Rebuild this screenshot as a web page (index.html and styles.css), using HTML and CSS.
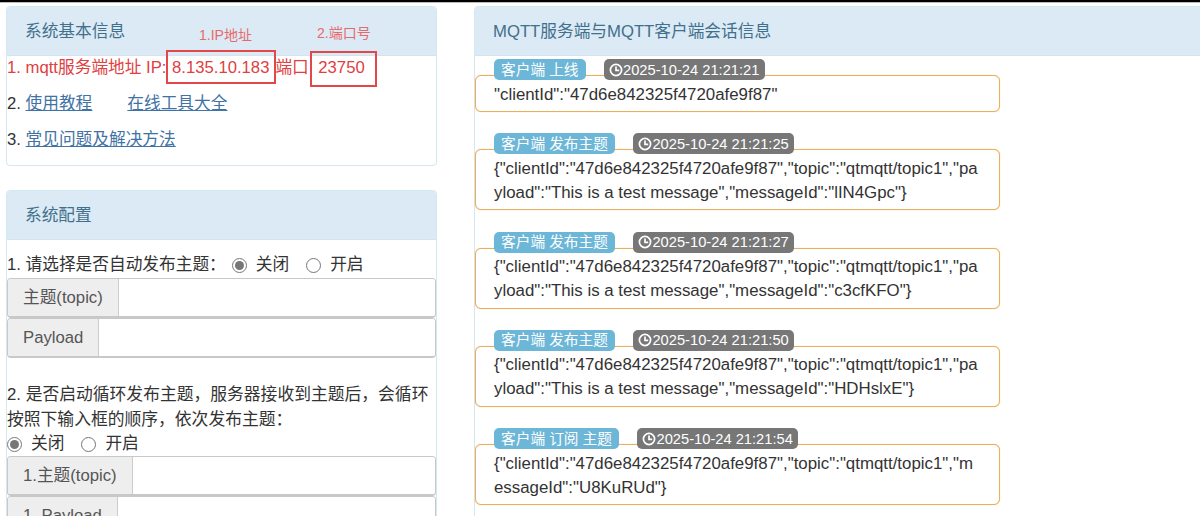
FILE: index.html
```html
<!DOCTYPE html>
<html lang="zh-CN">
<head>
  <meta charset="UTF-8" />
  <meta name="viewport" content="width=device-width, initial-scale=1.0"/>
  <title>MQTT服务端</title>
  <link rel="stylesheet" href="styles.css">
</head>
<body>
  <div class="top-line"></div>

  <div class="page">
    <div class="left-col">

      <div class="panel info-panel">
        <div class="panel-head">系统基本信息</div>
        <div class="panel-body">
          <p class="red">1. mqtt服务端地址 IP:<span class="ip">8.135.10.183</span>端口<span class="port">23750</span></p>
          <p>2. <a href="#">使用教程</a><a href="#" class="tools">在线工具大全</a></p>
          <p>3. <a href="#">常见问题及解决方法</a></p>
        </div>
        <!-- annotations drawn on top of the panel -->
        <span class="note note-ip">1.IP地址</span>
        <span class="note note-port">2.端口号</span>
        <div class="mark mark-ip"></div>
        <div class="mark mark-port"></div>
      </div>

      <div class="panel config-panel">
        <div class="panel-head">系统配置</div>
        <div class="panel-body">
          <div class="choice first-choice">
            <span>1. 请选择是否自动发布主题：</span>
            <label><input type="radio" name="auto" checked> 关闭</label>
            <label><input type="radio" name="auto"> 开启</label>
          </div>
          <div class="input-group">
            <span class="addon">主题(topic)</span>
            <input type="text">
          </div>
          <div class="input-group">
            <span class="addon">Payload</span>
            <input type="text">
          </div>

          <div class="loop-text">2. 是否启动循环发布主题，服务器接收到主题后，会循环按照下输入框的顺序，依次发布主题：</div>
          <div class="choice">
            <label><input type="radio" name="loop" checked> 关闭</label>
            <label><input type="radio" name="loop"> 开启</label>
          </div>
          <div class="input-group">
            <span class="addon">1.主题(topic)</span>
            <input type="text">
          </div>
          <div class="input-group">
            <span class="addon">1. Payload</span>
            <input type="text">
          </div>
        </div>
      </div>
    </div>

    <div class="panel session-panel">
      <div class="panel-head">MQTT服务端与MQTT客户端会话信息</div>
      <div class="session-list">

        <div class="session">
          <div class="labels">
            <span class="label label-info">客户端 上线</span>
            <span class="label label-time"><svg class="clock" viewBox="0 0 14 14"><circle cx="7" cy="7" r="5.6"/><path d="M7 3.6V7.4H10.2"/></svg>2025-10-24 21:21:21</span>
          </div>
          <div class="msg">"clientId":"47d6e842325f4720afe9f87"</div>
        </div>

        <div class="session">
          <div class="labels">
            <span class="label label-info">客户端 发布主题</span>
            <span class="label label-time"><svg class="clock" viewBox="0 0 14 14"><circle cx="7" cy="7" r="5.6"/><path d="M7 3.6V7.4H10.2"/></svg>2025-10-24 21:21:25</span>
          </div>
          <div class="msg">{"clientId":"47d6e842325f4720afe9f87","topic":"qtmqtt/topic1","payload":"This is a test message","messageId":"lIN4Gpc"}</div>
        </div>

        <div class="session">
          <div class="labels">
            <span class="label label-info">客户端 发布主题</span>
            <span class="label label-time"><svg class="clock" viewBox="0 0 14 14"><circle cx="7" cy="7" r="5.6"/><path d="M7 3.6V7.4H10.2"/></svg>2025-10-24 21:21:27</span>
          </div>
          <div class="msg">{"clientId":"47d6e842325f4720afe9f87","topic":"qtmqtt/topic1","payload":"This is a test message","messageId":"c3cfKFO"}</div>
        </div>

        <div class="session">
          <div class="labels">
            <span class="label label-info">客户端 发布主题</span>
            <span class="label label-time"><svg class="clock" viewBox="0 0 14 14"><circle cx="7" cy="7" r="5.6"/><path d="M7 3.6V7.4H10.2"/></svg>2025-10-24 21:21:50</span>
          </div>
          <div class="msg">{"clientId":"47d6e842325f4720afe9f87","topic":"qtmqtt/topic1","payload":"This is a test message","messageId":"HDHslxE"}</div>
        </div>

        <div class="session">
          <div class="labels">
            <span class="label label-info">客户端 订阅 主题</span>
            <span class="label label-time"><svg class="clock" viewBox="0 0 14 14"><circle cx="7" cy="7" r="5.6"/><path d="M7 3.6V7.4H10.2"/></svg>2025-10-24 21:21:54</span>
          </div>
          <div class="msg">{"clientId":"47d6e842325f4720afe9f87","topic":"qtmqtt/topic1","messageId":"U8KuRUd"}</div>
        </div>

      </div>
    </div>
  </div>
</body>
</html>
```

FILE: styles.css
```css
html, body {
  height: 516px;
  overflow: hidden;
}

body {
  margin: 0;
  font-family: "Liberation Sans", "Noto Sans CJK SC", sans-serif;
  font-size: 16.7px;
  line-height: 24px;
  color: #333;
  background: #fff;
}

.top-line {
  height: 2px;
  background: #000;
  border-bottom: 1px solid #bbb;
}

.page {
  display: flex;
  align-items: flex-start;
  gap: 37px;
  padding: 3px 0 0 6px;
}

.left-col {
  width: 431px;
  flex-shrink: 0;
}

.panel {
  position: relative;
  background: #fff;
  border: 1px solid #d3e8ef;
  border-radius: 4px;
}

.panel-head {
  height: 48px;
  padding-left: 18px;
  line-height: 49px;
  color: #41708c;
  background: #dceaf5;
  border-bottom: 1px solid #d3e4ef;
  border-radius: 3px 3px 0 0;
}

/* left side */
.info-panel {
  height: 158px;
  margin-bottom: 24px;
}

.info-panel p {
  margin: 0 0 12px;
}

.red {
  color: #e0403f;
}

.ip {
  margin: 0 6px 0 5.5px;
}

.port {
  margin-left: 9.5px;
}

a {
  color: #3f73a5;
  text-decoration: underline;
}

.tools {
  margin-left: 35px;
}

.note {
  position: absolute;
  font-size: 14px;
  line-height: 18px;
  color: #e8696b;
}

.note-ip {
  left: 192px;
  top: 19px;
}

.note-port {
  left: 310px;
  top: 17px;
}

.mark {
  position: absolute;
  box-sizing: border-box;
  border: 2px solid #e2474a;
}

.mark-ip {
  left: 159px;
  top: 43px;
  width: 110px;
  height: 34px;
}

.mark-port {
  left: 303px;
  top: 44px;
  width: 67px;
  height: 36px;
}

.config-panel {
  height: 400px;
}

.config-panel .panel-body {
  padding-top: 13px;
}

.choice {
  display: flex;
  gap: 17px;
  height: 24px;
  white-space: nowrap;
}

.first-choice {
  margin-bottom: 1px;
}

.first-choice span {
  margin-right: -2px;
}

.first-choice label:first-of-type {
  margin-left: -9px;
}

.choice label {
  display: flex;
  align-items: center;
  gap: 9px;
}

.choice input {
  width: 15px;
  height: 15px;
  margin: 0;
  accent-color: #777;
}

.input-group {
  display: flex;
  box-sizing: border-box;
  height: 40px;
  border: 1px solid #c8c8c8;
  border-bottom-width: 2px;
  border-radius: 4px;
  overflow: hidden;
}

.addon {
  padding: 0 15px;
  line-height: 38px;
  color: #555;
  background: #eee;
  border-right: 1px solid #ccc;
  white-space: nowrap;
}

.input-group input {
  flex: 1;
  min-width: 0;
  border: 0;
  outline: 0;
}

.loop-text {
  margin-top: 25px;
  font-size: 16.8px;
  line-height: 24.5px;
}

/* right side */
.session-panel {
  width: 760px;
  flex-shrink: 0;
}

.session-list {
  padding-top: 3px;
}

.session {
  margin-bottom: 21.33px;
}

.labels {
  position: relative;
  z-index: 1;
  display: flex;
  gap: 18px;
  height: 21px;
  margin: 0 0 -5px 19px;
}

.label {
  display: flex;
  align-items: center;
  padding: 0 5.5px;
  font-size: 14.7px;
  color: #fff;
  border-radius: 5px;
}

.label-info {
  padding: 0 7px;
  background: #6cb6d8;
}

.label-time {
  background: #777;
}

.clock {
  width: 14px;
  height: 14px;
  fill: none;
  stroke: #fff;
  stroke-width: 1.7;
}

.msg {
  box-sizing: border-box;
  width: 525px;
  padding: 6.5px 21px 4.5px 18px;
  border: 1px solid #eaaf5c;
  border-radius: 6px;
  box-shadow: 0 0 1px #eeb868;
  font-size: 16.85px;
  line-height: 24px;
  word-break: break-all;
  background: #fff;
}
```
